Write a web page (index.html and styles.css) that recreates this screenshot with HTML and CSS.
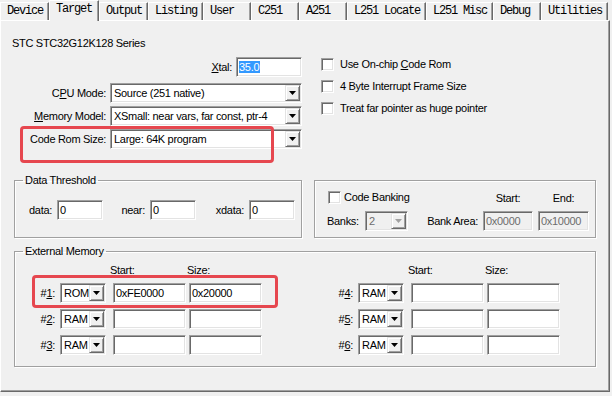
FILE: index.html
```html
<!DOCTYPE html>
<html lang="en">
<head>
    <meta charset="UTF-8">
    <title>Options for Target - Target</title>
    <link rel="stylesheet" href="styles.css">
</head>
<body>
    <!-- Tab strip -->
    <div class="tabs">
        <span class="tab">Device</span>
        <span class="tab active">Target</span>
        <span class="tab">Output</span>
        <span class="tab">Listing</span>
        <span class="tab">User</span>
        <span class="tab">C251</span>
        <span class="tab">A251</span>
        <span class="tab">L251 Locate</span>
        <span class="tab">L251 Misc</span>
        <span class="tab">Debug</span>
        <span class="tab">Utilities</span>
    </div>

    <div class="panel">
        <div class="series">STC STC32G12K128 Series</div>

        <div class="top">
            <div class="fields">
                <div class="field xtal-row">
                    <label><u>X</u>tal:</label>
                    <span class="edit xtal"><span class="sel">35.0</span></span>
                </div>
                <div class="field">
                    <label>C<u>P</u>U Mode:</label>
                    <span class="combo wide"><span class="val">Source (251 native)</span><span class="btn"></span></span>
                </div>
                <div class="field">
                    <label><u>M</u>emory Model:</label>
                    <span class="combo wide"><span class="val">XSmall: near vars, far const, ptr-4</span><span class="btn"></span></span>
                </div>
                <div class="field">
                    <label>Code Rom Size:</label>
                    <span class="combo wide"><span class="val">Large: 64K program</span><span class="btn"></span></span>
                </div>
            </div>
            <div class="checks">
                <div class="check"><span class="box"></span><span>Use On-chip <u>C</u>ode Rom</span></div>
                <div class="check"><span class="box"></span><span>4 Byte Interrupt Frame Size</span></div>
                <div class="check"><span class="box"></span><span>Treat far pointer as huge pointer</span></div>
            </div>
        </div>

        <div class="groups">
            <fieldset class="group threshold">
                <legend>Data Threshold</legend>
                <div class="thr-row">
                    <label>data:</label><span class="edit">0</span>
                    <label>near:</label><span class="edit">0</span>
                    <label>xdata:</label><span class="edit">0</span>
                </div>
            </fieldset>
            <fieldset class="group banking">
                <div class="bank-grid">
                    <div class="cb-check"><span class="box"></span><span>Code Banking</span></div>
                    <span class="hdr hdr-start">Start:</span>
                    <span class="hdr hdr-end">End:</span>
                    <label>Banks:</label>
                    <span class="combo disabled"><span class="val">2</span><span class="btn"></span></span>
                    <label class="bank-area">Bank Area:</label>
                    <span class="edit disabled">0x0000</span>
                    <span class="edit disabled">0x10000</span>
                </div>
            </fieldset>
        </div>

        <fieldset class="group extmem">
            <legend>External Memory</legend>
            <div class="mem-cols">
                <div class="mem-half">
                    <span class="hdr-start">Start:</span>
                    <span class="hdr-size">Size:</span>
                    <label>#<u>1</u>:</label>
                    <span class="combo"><span class="val">ROM</span><span class="btn"></span></span>
                    <span class="edit">0xFE0000</span>
                    <span class="edit">0x20000</span>
                    <label>#<u>2</u>:</label>
                    <span class="combo"><span class="val">RAM</span><span class="btn"></span></span>
                    <span class="edit"></span>
                    <span class="edit"></span>
                    <label>#<u>3</u>:</label>
                    <span class="combo"><span class="val">RAM</span><span class="btn"></span></span>
                    <span class="edit"></span>
                    <span class="edit"></span>
                </div>
                <div class="mem-half">
                    <span class="hdr-start">Start:</span>
                    <span class="hdr-size">Size:</span>
                    <label>#<u>4</u>:</label>
                    <span class="combo"><span class="val">RAM</span><span class="btn"></span></span>
                    <span class="edit"></span>
                    <span class="edit"></span>
                    <label>#<u>5</u>:</label>
                    <span class="combo"><span class="val">RAM</span><span class="btn"></span></span>
                    <span class="edit"></span>
                    <span class="edit"></span>
                    <label>#<u>6</u>:</label>
                    <span class="combo"><span class="val">RAM</span><span class="btn"></span></span>
                    <span class="edit"></span>
                    <span class="edit"></span>
                </div>
            </div>
        </fieldset>

        <!-- annotation frames -->
        <div class="mark mark-rom"></div>
        <div class="mark mark-mem"></div>
    </div>
</body>
</html>
```
FILE: styles.css
```css
* { box-sizing: border-box; }
body {
    margin: 0; width: 612px; height: 396px; overflow: hidden;
    background: #f0f0f0; color: #000;
    font-family: "Liberation Sans", Arial, sans-serif; font-size: 11px; letter-spacing: -0.3px;
}
label { white-space: nowrap; }

/* Tabs */
.tabs {
    display: flex; align-items: flex-end; height: 20px;
    font-family: "Liberation Mono", "DejaVu Sans Mono", monospace; font-size: 12px; letter-spacing: -1.2px;
}
.tab {
    height: 18px; min-width: 48px; padding: 0 5px 0 6px; line-height: 17px; white-space: pre;
    border-top: 1px solid #fff; border-left: 1px solid #fff; border-right: 1px solid #696969;
    box-shadow: inset -1px 0 #a0a0a0;
}
.tab.active {
    height: 21px; margin-bottom: -1px; line-height: 16px; min-width: 50px;
    position: relative; z-index: 1; background: #f0f0f0;
}

/* Tab page */
.panel {
    position: relative; width: 610px; height: 372px;
    border: 1px solid; border-color: #fff #696969 #696969 #fff;
    box-shadow: inset -1px -1px #a0a0a0;
    padding: 16px 0 0 13px;
}
.series { margin-left: -2px; line-height: 13px; }

.top { display: flex; margin-top: 7px; }
.fields { width: 288px; display: flex; flex-direction: column; gap: 3px; }
.field { display: flex; justify-content: flex-end; align-items: center; gap: 4px; height: 20px; }
.field.xtal-row { margin-bottom: 3px; }
.checks { margin-left: 19px; margin-top: -4px; display: flex; flex-direction: column; }
.check { display: flex; align-items: center; gap: 6px; height: 22px; white-space: nowrap; }

/* Controls */
.box {
    width: 13px; height: 13px; flex: none; background: #fff;
    border: 1px solid; border-color: #a0a0a0 #fff #fff #a0a0a0;
    box-shadow: inset 1px 1px #696969, inset -1px -1px #e3e3e3;
}
.edit {
    display: block; height: 20px; padding: 1px 2px; line-height: 16px; white-space: nowrap; overflow: hidden;
    background: #fff;
    border: 1px solid; border-color: #a0a0a0 #fff #fff #a0a0a0;
    box-shadow: inset 1px 1px #696969, inset -1px -1px #e3e3e3;
}
.edit.xtal { width: 66px; }
.sel { background: #3399ff; color: #fff; padding: 0 1px 0 0; }
.edit.disabled { background: #f0f0f0; color: #6d6d6d; }

.combo {
    display: flex; height: 20px; padding: 1px; background: #fff;
    border: 1px solid; border-color: #a0a0a0 #fff #fff #a0a0a0;
    box-shadow: inset 1px 1px #696969, inset -1px -1px #e3e3e3;
}
.combo.wide { width: 192px; }
.combo .val { flex: 1; padding-left: 2px; line-height: 16px; white-space: nowrap; overflow: hidden; }
.btn {
    width: 15px; height: 16px; flex: none; background: #f0f0f0;
    border: 1px solid; border-color: #e3e3e3 #696969 #696969 #e3e3e3;
    box-shadow: inset 1px 1px #fff, inset -1px -1px #a0a0a0;
    display: flex; align-items: center; justify-content: center;
}
.btn::after {
    content: ""; width: 7px; height: 4px; background: #000;
    clip-path: polygon(0 0, 100% 0, 50% 100%);
}
.combo.disabled { background: #f0f0f0; color: #6d6d6d; }
.combo.disabled .btn::after { background: #a0a0a0; }

/* Group boxes */
.group {
    margin: 0; padding: 0; min-width: 0;
    border: 1px solid #a0a0a0;
    box-shadow: 1px 1px 0 #fff, inset 1px 1px 0 #fff;
}
.group legend { margin-left: 8px; padding: 0 2px; line-height: 13px; }

.groups { display: flex; align-items: flex-start; gap: 12px; margin-top: 25px; }
.threshold { width: 288px; }
.thr-row {
    display: grid; grid-template-columns: 42px 46px 47px 46px 53px 46px; align-items: center;
    padding: 13px 0 17px 0;
}
.thr-row label, .mem-half label { text-align: right; padding-right: 5px; }

.banking { width: 282px; margin-top: 6px; }
.bank-grid {
    display: grid; grid-template-columns: 38px 43px 75px 55px 51px; grid-template-rows: 16px 20px;
    row-gap: 6px; align-items: center; padding: 8px 0 6px 12px;
}
.cb-check { grid-column: 1 / 4; display: flex; align-items: center; gap: 3px; padding-left: 1px; }
.hdr { align-self: end; line-height: 13px; text-align: center; }
.hdr-start { padding-right: 5px; }
.bank-area { text-align: right; padding-right: 5px; }
.bank-grid .edit.disabled:nth-last-child(2) { width: 50px; }

.extmem { width: 582px; margin-top: 7px; }
.mem-cols { display: flex; gap: 72px; padding: 6px 0 11px 21px; }
.mem-half {
    display: grid; grid-template-columns: 24px 53px 76px 73px; grid-auto-rows: 20px;
    grid-template-rows: 13px; row-gap: 6px; align-items: center;
}
.mem-half .combo { width: 46px; }
.mem-half .edit { width: 73px; }
.mem-half .hdr-start { grid-column: 3; margin-left: -3px; line-height: 13px; padding: 0; }
.mem-half .hdr-size { grid-column: 4; margin-left: -2px; line-height: 13px; }

/* Red annotation frames */
.mark { position: absolute; border: 3px solid #e6474f; border-radius: 4px; }
.mark-rom { left: 19px; top: 105px; width: 254px; height: 37px; }
.mark-mem { left: 31px; top: 254px; width: 246px; height: 33px; }
```
